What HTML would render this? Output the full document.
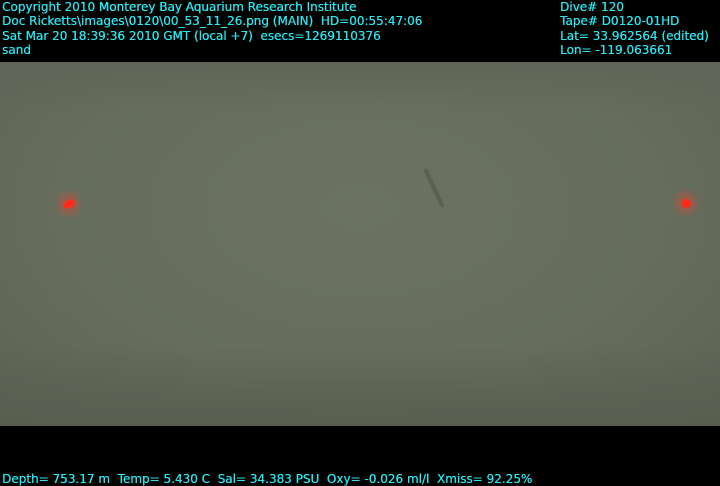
<!DOCTYPE html>
<html><head><style>
html,body{margin:0;padding:0;background:#000;width:720px;height:486px;overflow:hidden;position:relative}
.t{position:absolute;color:#27e6ee;font-family:"DejaVu Sans","Liberation Sans",sans-serif;font-size:12px;line-height:14.3px;white-space:pre;text-shadow:0.3px 0 0 #27e6ee}
#img{position:absolute;left:0;top:62px;width:720px;height:364px;
background:radial-gradient(ellipse 70% 80% at 50% 40%,#6b7262 0%,#666d5d 60%,#5c6354 100%);}
.dot{position:absolute;border-radius:50%}
</style></head><body>
<div id="img">
<div style="position:absolute;left:0;top:0;right:0;height:50px;background:linear-gradient(#5f6657,transparent)"></div>
<div style="position:absolute;left:0;bottom:0;right:0;height:80px;background:linear-gradient(transparent,#585f50)"></div>
<div class="dot" style="left:52px;top:128px;width:34px;height:28px;background:radial-gradient(circle,rgba(255,60,40,.5),transparent 70%)"></div>
<div class="dot" style="left:63px;top:138px;width:12px;height:8px;background:#ff2a1a;transform:rotate(-25deg)"></div>
<div class="dot" style="left:670px;top:126px;width:32px;height:30px;background:radial-gradient(circle,rgba(255,60,40,.5),transparent 70%)"></div>
<div class="dot" style="left:682px;top:137px;width:9px;height:9px;background:#ff2a1a"></div>
<div style="position:absolute;left:432px;top:105px;width:4px;height:42px;background:rgba(60,66,55,.35);border-radius:3px;transform:rotate(-25deg)"></div>
</div>
<div class="t" style="left:2px;top:0">Copyright 2010 Monterey Bay Aquarium Research Institute
Doc Ricketts\images\0120\00_53_11_26.png (MAIN)  HD=00:55:47:06
Sat Mar 20 18:39:36 2010 GMT (local +7)  esecs=1269110376
sand</div>
<div class="t" style="left:560px;top:0">Dive# 120
Tape# D0120-01HD
Lat= 33.962564 (edited)
Lon= -119.063661</div>
<div class="t" style="left:2px;top:472px">Depth= 753.17 m  Temp= 5.430 C  Sal= 34.383 PSU  Oxy= -0.026 ml/l  Xmiss= 92.25%</div>
</body></html>
